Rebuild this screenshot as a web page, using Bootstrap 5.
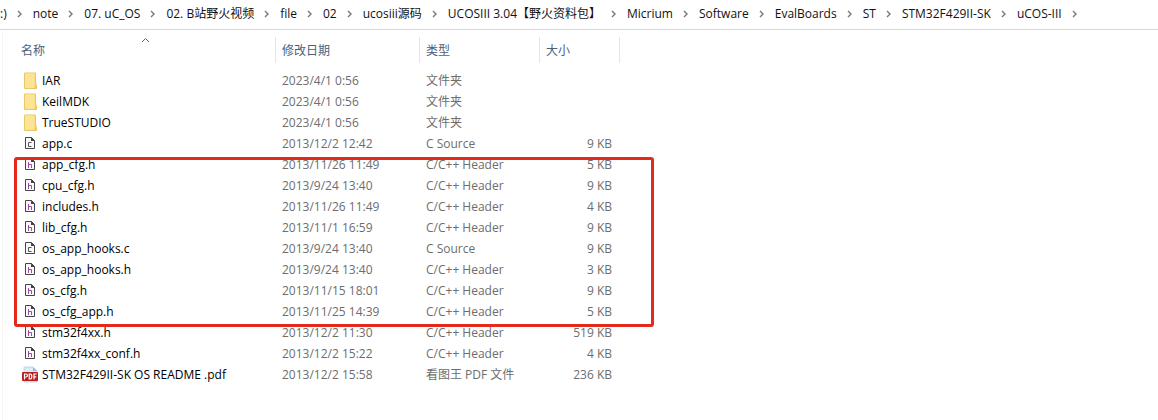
<!DOCTYPE html>
<html lang="zh-CN">
<head>
<meta charset="utf-8">
<meta name="viewport" content="width=device-width, initial-scale=1">
<title>uCOS-III</title>
<link href="https://cdn.jsdelivr.net/npm/bootstrap@5.3.0/dist/css/bootstrap.min.css" rel="stylesheet">
<style>
body { font-family: "Open Sans", "Noto Sans CJK SC", sans-serif; font-size: 12px; line-height: 20px; color: #000; background: #fff; overflow-x: hidden; }
.path-bar { height: 30px; padding-bottom: 1px; border-bottom: 1px solid #d5d9d9; white-space: nowrap; }
.path-bar ol { gap: 11px; }
.path-bar li { gap: 10px; }
.path-bar a { color: #111; text-decoration: none; }
.path-bar svg { width: 5px; height: 8px; fill: none; stroke: #777; stroke-width: 1.4; }
.pane { margin-left: 2px; border-left: 1px solid #f4f4f4; min-height: calc(100vh - 30px); }
.files { width: 617px; table-layout: fixed; border-collapse: separate; border-spacing: 0; white-space: nowrap; }
.files th { height: 40px; padding: 7px 0; font-weight: 400; vertical-align: middle; color: #4c607a; }
.files th button { display: block; width: 100%; height: 26px; padding: 1px 0 0 6px; border: 0; border-right: 1px solid #e2e4e6; background: none; color: inherit; text-align: left; line-height: 26px; }
.files th:first-child button { padding-left: 18px; }
.files td { height: 21px; padding: 0 0 0 6px; line-height: 21px; color: #6d6d6d; vertical-align: middle; }
.files td:first-child { padding-left: 18px; color: #000; }
.files td:last-child { padding: 0 8px 0 0; text-align: right; }
.files td svg { width: 18px; height: 17px; margin-right: 3px; flex: none; }
.sort { left: 138px; top: 7px; width: 9px; height: 6px; fill: none; stroke: #666; }
.frame { left: 11px; top: 127px; width: 640px; height: 170px; border: 3px solid #e42a1d; border-radius: 3px; pointer-events: none; }
</style>
</head>
<body>
<svg class="d-none" aria-hidden="true">
  <symbol id="chev" viewBox="0 0 5 8"><path d="M1 1l3 3-3 3"/></symbol>
  <symbol id="folder" viewBox="-1 0 18 17">
    <path d="M2.500 1h11v11.500l1 1v3h-12z" fill="#fbe08a" stroke="#e9c766" stroke-width="1"/>
    <path d="M3 1.500h9v14H3z" fill="#fde394"/>
    <path d="M12 16.500l2.500-6v6z" fill="#edc75c"/>
  </symbol>
  <symbol id="page" viewBox="0 0 18 17">
    <path d="M3.500 2.500h6l3 3v8h-9z" fill="#faf8fb" stroke="#454545" stroke-width="1"/>
    <path d="M9 2v4h4z" fill="#454545"/>
  </symbol>
  <symbol id="filec" viewBox="-1 0 18 17"><path d="M3.500 2.500h6l3 3v8h-9z" fill="#f8f8f8" stroke="#454545"/><path d="M9 2l4 4H9z" fill="#454545"/><path d="M9.500 7.500h-3v4h3" fill="none" stroke="#555"/></symbol>
  <symbol id="fileh" viewBox="-1 0 18 17"><path d="M3.500 2.500h6l3 3v8h-9z" fill="#faf6fb" stroke="#454545"/><path d="M9 2l4 4H9z" fill="#454545"/><path d="M6.500 6v6M6.500 8.500h3V12" fill="none" stroke="#9b4f9e"/></symbol>
  <symbol id="pdf" viewBox="0 0 18 17">
    <path d="M3 1h9l4 4v11H3z" fill="#dcecf6" stroke="#b3cfdf" stroke-width=".8"/>
    <path d="M12 1l4 4h-4z" fill="#8dbfdd"/>
    <rect x="1" y="6" width="16" height="9" rx="1" fill="#b81c1c"/>
    <g fill="none" stroke="#fff" stroke-width="1.200"><path d="M3.500 13.500V8h1.500q1.400 0 1.400 1.500T5 11H3.500"/><path d="M8.200 8v5h1q1.600 0 1.600-2.500T9.200 8z"/><path d="M15.800 8H13v5.500M13 10.800h2.300"/></g>
  </symbol>
</svg>

<nav class="path-bar d-flex align-items-center" aria-label="路径">
  <ol class="list-unstyled d-flex align-items-center mb-0">
    <li class="d-flex align-items-center"><a href="#">:)</a><svg><use href="#chev"/></svg></li>
    <li class="d-flex align-items-center"><a href="#">note</a><svg><use href="#chev"/></svg></li>
    <li class="d-flex align-items-center"><a href="#">07. uC_OS</a><svg><use href="#chev"/></svg></li>
    <li class="d-flex align-items-center"><a href="#">02. B站野火视频</a><svg><use href="#chev"/></svg></li>
    <li class="d-flex align-items-center"><a href="#">file</a><svg><use href="#chev"/></svg></li>
    <li class="d-flex align-items-center"><a href="#">02</a><svg><use href="#chev"/></svg></li>
    <li class="d-flex align-items-center"><a href="#">ucosiii源码</a><svg><use href="#chev"/></svg></li>
    <li class="d-flex align-items-center"><a href="#">UCOSIII 3.04【野火资料包】</a><svg><use href="#chev"/></svg></li>
    <li class="d-flex align-items-center"><a href="#">Micrium</a><svg><use href="#chev"/></svg></li>
    <li class="d-flex align-items-center"><a href="#">Software</a><svg><use href="#chev"/></svg></li>
    <li class="d-flex align-items-center"><a href="#">EvalBoards</a><svg><use href="#chev"/></svg></li>
    <li class="d-flex align-items-center"><a href="#">ST</a><svg><use href="#chev"/></svg></li>
    <li class="d-flex align-items-center"><a href="#">STM32F429II-SK</a><svg><use href="#chev"/></svg></li>
    <li class="d-flex align-items-center"><a href="#">uCOS-III</a><svg><use href="#chev"/></svg></li>
  </ol>
</nav>

<main class="pane position-relative">
  <table class="files">
    <colgroup><col style="width:273px"><col style="width:144px"><col style="width:120px"><col style="width:80px"></colgroup>
    <thead>
      <tr><th scope="col" aria-sort="ascending"><button type="button">名称</button></th><th scope="col"><button type="button">修改日期</button></th><th scope="col"><button type="button">类型</button></th><th scope="col"><button type="button">大小</button></th></tr>
    </thead>
    <tbody>
      <tr><td><div class="d-flex align-items-center"><svg><use href="#folder"/></svg>IAR</div></td><td>2023/4/1 0:56</td><td>文件夹</td><td></td></tr>
      <tr><td><div class="d-flex align-items-center"><svg><use href="#folder"/></svg>KeilMDK</div></td><td>2023/4/1 0:56</td><td>文件夹</td><td></td></tr>
      <tr><td><div class="d-flex align-items-center"><svg><use href="#folder"/></svg>TrueSTUDIO</div></td><td>2023/4/1 0:56</td><td>文件夹</td><td></td></tr>
      <tr><td><div class="d-flex align-items-center"><svg><use href="#filec"/></svg>app.c</div></td><td>2013/12/2 12:42</td><td>C Source</td><td>9 KB</td></tr>
      <tr><td><div class="d-flex align-items-center"><svg><use href="#fileh"/></svg>app_cfg.h</div></td><td>2013/11/26 11:49</td><td>C/C++ Header</td><td>5 KB</td></tr>
      <tr><td><div class="d-flex align-items-center"><svg><use href="#fileh"/></svg>cpu_cfg.h</div></td><td>2013/9/24 13:40</td><td>C/C++ Header</td><td>9 KB</td></tr>
      <tr><td><div class="d-flex align-items-center"><svg><use href="#fileh"/></svg>includes.h</div></td><td>2013/11/26 11:49</td><td>C/C++ Header</td><td>4 KB</td></tr>
      <tr><td><div class="d-flex align-items-center"><svg><use href="#fileh"/></svg>lib_cfg.h</div></td><td>2013/11/1 16:59</td><td>C/C++ Header</td><td>9 KB</td></tr>
      <tr><td><div class="d-flex align-items-center"><svg><use href="#filec"/></svg>os_app_hooks.c</div></td><td>2013/9/24 13:40</td><td>C Source</td><td>9 KB</td></tr>
      <tr><td><div class="d-flex align-items-center"><svg><use href="#fileh"/></svg>os_app_hooks.h</div></td><td>2013/9/24 13:40</td><td>C/C++ Header</td><td>3 KB</td></tr>
      <tr><td><div class="d-flex align-items-center"><svg><use href="#fileh"/></svg>os_cfg.h</div></td><td>2013/11/15 18:01</td><td>C/C++ Header</td><td>9 KB</td></tr>
      <tr><td><div class="d-flex align-items-center"><svg><use href="#fileh"/></svg>os_cfg_app.h</div></td><td>2013/11/25 14:39</td><td>C/C++ Header</td><td>5 KB</td></tr>
      <tr><td><div class="d-flex align-items-center"><svg><use href="#fileh"/></svg>stm32f4xx.h</div></td><td>2013/12/2 11:30</td><td>C/C++ Header</td><td>519 KB</td></tr>
      <tr><td><div class="d-flex align-items-center"><svg><use href="#fileh"/></svg>stm32f4xx_conf.h</div></td><td>2013/12/2 15:22</td><td>C/C++ Header</td><td>4 KB</td></tr>
      <tr><td><div class="d-flex align-items-center"><svg><use href="#pdf"/></svg>STM32F429II-SK OS README .pdf</div></td><td>2013/12/2 15:58</td><td>看图王 PDF 文件</td><td>236 KB</td></tr>
    </tbody>
  </table>
  <svg class="sort position-absolute" viewBox="0 0 9 6" aria-hidden="true"><path d="M1 5l3.500-3.500L8 5"/></svg>
  <div class="frame position-absolute"></div>
</main>
<script src="https://cdn.jsdelivr.net/npm/bootstrap@5.3.0/dist/js/bootstrap.bundle.min.js"></script>
</body>
</html>
